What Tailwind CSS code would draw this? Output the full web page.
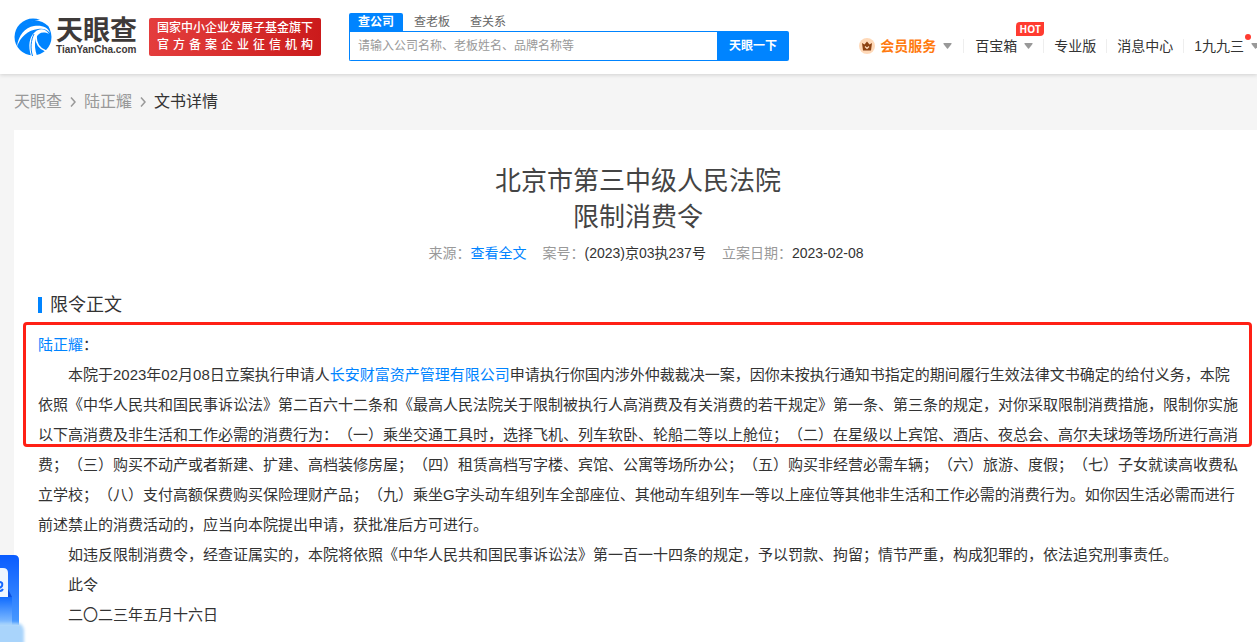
<!DOCTYPE html>
<html lang="zh-CN">
<head>
    <meta charset="UTF-8">
    <meta name="viewport" content="width=device-width, initial-scale=1.0">
    <title>限制消费令 - 天眼查</title>
    <script src="https://cdn.jsdelivr.net/npm/@tailwindcss/browser@4"></script>
</head>
<body class="bg-[#f5f5f5] min-h-screen overflow-hidden text-[#333] font-['Liberation_Sans','Noto_Sans_CJK_SC',sans-serif] [text-spacing-trim:space-all]">
    <!-- Header -->
    <header class="relative flex h-[74px] bg-white pl-3.5 shadow-[0_1px_4px_rgba(0,0,0,0.15)] overflow-x-clip whitespace-nowrap">
        <a href="#" class="flex w-[123px] shrink-0 items-start gap-1 pt-[18px]">
            <svg class="w-[38px] h-[38px] shrink-0" viewBox="0 0 38 38" fill="none">
                <circle cx="19" cy="19" r="18.500" fill="#0084ff"/>
                <path d="M11 7C18 2 27 3 33 8L37 4L30 0C26 3 18 2 11 7Z" fill="#fff"/>
                <path d="M12 6C19 1 28 2 34 8C35 9 35 10 36 12C30 6 21 5 12 6Z" fill="#0084ff"/>
                <path d="M3 29C4 18 11 9 20 8C28 7 34 9 36 15C33 11 28 10 24 11C14 12 6 19 3 29Z" fill="#fff"/>
                <path d="M17 38C14 28 15 19 21 14C25 10 32 10 35 16C29 13 24 15 22 20C20 26 21 32 23 38Z" fill="#fff"/>
                <path d="M20 16C17 22 16 30 18.500 38" stroke="#0084ff" stroke-width="1"/>
                <path d="M22 18C22 26 26 31 32 33" stroke="#fff" stroke-width="1.500"/>
            </svg>
            <span class="flex flex-col text-[#3e3a39] font-bold">
                <span class="text-[27px] leading-[26px]">天眼查</span>
                <span class="text-[10px] leading-3">TianYanCha.com</span>
            </span>
        </a>
        <div class="ml-3 mt-[18px] h-[38px] w-[172px] shrink-0 rounded-xs bg-linear-to-r from-[#e43d3d] to-[#cb1a1b] px-2 py-0.5 text-xs leading-[17px] font-medium text-white">
            <p>国家中小企业发展子基金旗下</p>
            <p class="[text-align-last:justify]">官方备案企业征信机构</p>
        </div>

        <form class="ml-7 w-[440px] shrink-0 pt-[13px] text-xs">
            <div class="flex h-[18px] gap-0.5 leading-[18px] text-[#666]">
                <button type="button" class="rounded-t-xs bg-[#0084ff] px-[9px] font-bold text-white">查公司</button>
                <button type="button" class="px-[9px]">查老板</button>
                <button type="button" class="px-[9px]">查关系</button>
            </div>
            <div class="flex h-[30px]">
                <input type="text" aria-label="搜索" placeholder="请输入公司名称、老板姓名、品牌名称等" class="min-w-0 flex-1 rounded-bl-xs border border-r-0 border-[#0084ff] px-2 placeholder:text-[#999]">
                <button type="submit" class="w-[72px] rounded-r-xs bg-[#0084ff] font-bold text-white">天眼一下</button>
            </div>
        </form>

        <nav class="ml-auto -mr-[3px] flex items-center pt-[18px] text-sm">
            <a href="#" class="flex items-center font-bold text-[#ff7a0f]">
                <svg class="mr-[5px] w-4 h-4" viewBox="0 0 16 16">
                    <circle cx="8" cy="8" r="8" fill="#ffd9b8"/>
                    <path d="M3 5L5.500 6.500L8 3.500L10.500 6.500L13 5L12 12.500H4Z" fill="#8d4312"/>
                    <path d="M6 8.500L8 10.500L10 8.500" stroke="#ffd9b8" stroke-width="1.200" fill="none"/>
                </svg>
                会员服务
                <svg class="ml-[7px] w-[9px] h-[6px]" viewBox="0 0 9 6"><path d="M1 0H8Q9 0 8.500 1L5 5.500Q4.500 6 4 5.500L0.500 1Q0 0 1 0Z" fill="#999"/></svg>
            </a>
            <span class="mx-[11px] h-3.5 w-px bg-[#eee]"></span>
            <a href="#" class="relative flex items-center">
                百宝箱
                <svg class="ml-[7px] w-[9px] h-[6px]" viewBox="0 0 9 6"><path d="M1 0H8Q9 0 8.500 1L5 5.500Q4.500 6 4 5.500L0.500 1Q0 0 1 0Z" fill="#999"/></svg>
                <span class="absolute left-[41px] -top-3.5 h-3.5 w-7 rounded-tl-sm rounded-br-sm bg-[#ff3b30] text-center font-['Open_Sans'] text-[10px] leading-3.5 font-bold text-white">HOT</span>
            </a>
            <span class="mx-[10px] h-3.5 w-px bg-[#eee]"></span>
            <a href="#">专业版</a>
            <span class="mx-[10px] h-3.5 w-px bg-[#eee]"></span>
            <a href="#">消息中心</a>
            <span class="mx-[10px] h-3.5 w-px bg-[#eee]"></span>
            <a href="#" class="relative flex items-center">
                1九九三
                <span class="absolute right-[9px] -top-0.5 size-1.5 rounded-full bg-[#ff3b30]"></span>
                <svg class="ml-[7px] w-[9px] h-[6px]" viewBox="0 0 9 6"><path d="M1 0H8Q9 0 8.500 1L5 5.500Q4.500 6 4 5.500L0.500 1Q0 0 1 0Z" fill="#999"/></svg>
            </a>
        </nav>
    </header>

    <!-- Breadcrumb -->
    <nav class="flex h-14 items-center gap-2 px-3.5 text-base text-[#999]">
        <a href="#">天眼查</a>
        <svg class="w-1.5 h-3" viewBox="0 0 6 12" fill="none" stroke="#999" stroke-width="1.500"><path d="M1 1.500L5 6L1 10.500"/></svg>
        <a href="#">陆正耀</a>
        <svg class="w-1.5 h-3" viewBox="0 0 6 12" fill="none" stroke="#999" stroke-width="1.500"><path d="M1 1.500L5 6L1 10.500"/></svg>
        <span class="text-[#333]">文书详情</span>
    </nav>

    <!-- Document -->
    <main class="ml-3.5 bg-white pt-[33px] pr-[19px] pb-6 pl-6">
        <h1 class="text-center text-[26px] leading-9 text-[#444]">北京市第三中级人民法院<br>限制消费令</h1>
        <div class="mt-2 flex justify-center text-sm text-[#999]">
            <p class="ml-4">来源：<a href="#" class="text-[#0084ff]">查看全文</a></p>
            <p class="ml-4">案号：<span class="text-[#333]">(2023)京03执237号</span></p>
            <p class="ml-4">立案日期：<span class="text-[#333]">2023-02-08</span></p>
        </div>

        <h2 class="mt-7 flex items-center gap-2 text-lg">
            <span class="h-4 w-1 bg-[#0084ff]"></span>限令正文
        </h2>
        <article class="relative mt-[11px] text-[15px] leading-[30px]">
            <p><a href="#" class="text-[#0084ff]">陆正耀</a>：</p>
            <p class="indent-[30px]">本院于2023年02月08日立案执行申请人<a href="#" class="text-[#0084ff]">长安财富资产管理有限公司</a>申请执行你国内涉外仲裁裁决一案，因你未按执行通知书指定的期间履行生效法律文书确定的给付义务，本院依照《中华人民共和国民事诉讼法》第二百六十二条和《最高人民法院关于限制被执行人高消费及有关消费的若干规定》第一条、第三条的规定，对你采取限制消费措施，限制你实施以下高消费及非生活和工作必需的消费行为：（一）乘坐交通工具时，选择飞机、列车软卧、轮船二等以上舱位；（二）在星级以上宾馆、酒店、夜总会、高尔夫球场等场所进行高消费；（三）购买不动产或者新建、扩建、高档装修房屋；（四）租赁高档写字楼、宾馆、公寓等场所办公；（五）购买非经营必需车辆；（六）旅游、度假；（七）子女就读高收费私立学校；（八）支付高额保费购买保险理财产品；（九）乘坐G字头动车组列车全部座位、其他动车组列车一等以上座位等其他非生活和工作必需的消费行为。如你因生活必需而进行前述禁止的消费活动的，应当向本院提出申请，获批准后方可进行。</p>
            <p class="indent-[30px]">如违反限制消费令，经查证属实的，本院将依照《中华人民共和国民事诉讼法》第一百一十四条的规定，予以罚款、拘留；情节严重，构成犯罪的，依法追究刑事责任。</p>
            <p class="indent-[30px]">此令</p>
            <p class="indent-[30px]">二〇二三年五月十六日</p>
            <!-- marked passage -->
            <div class="pointer-events-none absolute -top-2 -right-3.5 -left-[15px] h-[125px] rounded-sm border-3 border-[#ff2015]"></div>
        </article>
    </main>

    <!-- Floating banner, tucked into the left edge -->
    <a href="#" aria-label="活动" class="fixed bottom-0 left-0 h-[87px] w-[27px]">
        <svg class="h-full w-full" viewBox="0 0 27 87">
            <defs>
                <linearGradient id="banner" x1="0" y1="0" x2="0" y2="1">
                    <stop offset="0" stop-color="#0a5cff"/>
                    <stop offset="1" stop-color="#4a9bff"/>
                </linearGradient>
                <linearGradient id="pocket" x1="0" y1="0" x2="0" y2="1">
                    <stop offset="0" stop-color="#0f6bff"/>
                    <stop offset="1" stop-color="#8cc4ff"/>
                </linearGradient>
                <filter id="soft"><feGaussianBlur stdDeviation="1.500"/></filter>
            </defs>
            <path d="M0 0H14Q19 0 19 5V70H0Z" fill="url(#banner)"/>
            <path d="M0 13H3Q8 13 8 18V42H0Z" fill="#eef6ff"/>
            <path d="M0 27Q3 27 2 31L0 33M0 36Q2 36 3 34" fill="none" stroke="#1668ff" stroke-width="2"/>
            <path d="M8 34L12 42H8Z" fill="#0a4fe0"/>
            <path d="M0 42H12V70H0Z" fill="url(#pocket)"/>
            <path d="M-4 68H18Q24 70 24 76V92H-4Z" fill="#a9d4fb" filter="url(#soft)"/>
        </svg>
    </a>
</body>
</html>
